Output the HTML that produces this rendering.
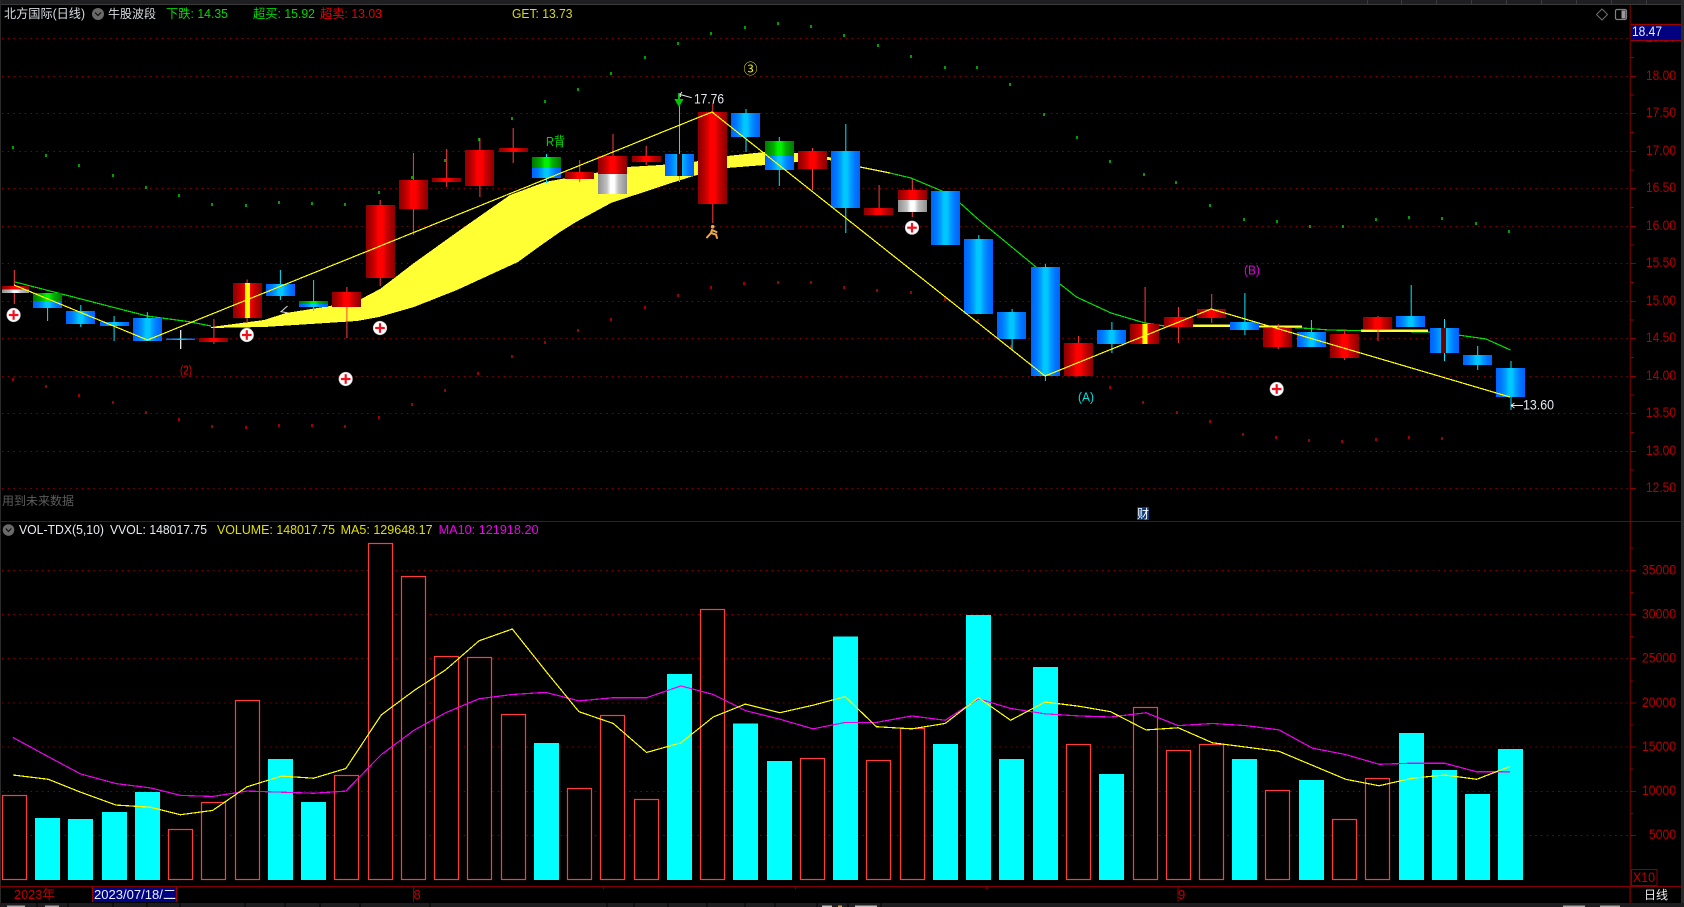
<!DOCTYPE html>
<html lang="zh">
<head>
<meta charset="utf-8">
<title>北方国际(日线)</title>
<style>
html,body{margin:0;padding:0;background:#000;width:1684px;height:907px;overflow:hidden}
svg{display:block;font-family:"Liberation Sans","Noto Sans CJK SC",sans-serif}
.g{stroke:#850000;stroke-width:1;stroke-dasharray:1.5 4.2;fill:none}
.ax{fill:#b40000;font-size:14px}
.wr{fill:#ff3c3c}
.wc{fill:#00e8ff}
.v{fill:#000;stroke:#ff3c3c;stroke-width:1.2}
.f{fill:#00ffff}
.c{shape-rendering:crispEdges}
</style>
</head>
<body>
<svg width="1684" height="907" viewBox="0 0 1684 907" xmlns="http://www.w3.org/2000/svg">
<defs>
<linearGradient id="r"><stop offset="0" stop-color="#8c0000"/><stop offset=".14" stop-color="#a80000"/><stop offset=".3" stop-color="#d00000"/><stop offset=".42" stop-color="#ff0000"/><stop offset=".58" stop-color="#ff0000"/><stop offset=".7" stop-color="#d00000"/><stop offset=".86" stop-color="#a80000"/><stop offset="1" stop-color="#8c0000"/></linearGradient>
<linearGradient id="b"><stop offset="0" stop-color="#0060ff"/><stop offset=".18" stop-color="#0078ff"/><stop offset=".34" stop-color="#00a0ff"/><stop offset=".44" stop-color="#00c8ff"/><stop offset=".56" stop-color="#00c8ff"/><stop offset=".66" stop-color="#00a0ff"/><stop offset=".82" stop-color="#0078ff"/><stop offset="1" stop-color="#0060ff"/></linearGradient>
<linearGradient id="n"><stop offset="0" stop-color="#007800"/><stop offset=".3" stop-color="#00b000"/><stop offset=".44" stop-color="#00f000"/><stop offset=".56" stop-color="#00f000"/><stop offset=".7" stop-color="#00b000"/><stop offset="1" stop-color="#007800"/></linearGradient>
<linearGradient id="w"><stop offset="0" stop-color="#909090"/><stop offset=".3" stop-color="#c0c0c0"/><stop offset=".44" stop-color="#ffffff"/><stop offset=".56" stop-color="#ffffff"/><stop offset=".7" stop-color="#c0c0c0"/><stop offset="1" stop-color="#909090"/></linearGradient>
<g id="plus"><circle r="6.8" fill="#fff" stroke="#bbb" stroke-width=".6"/><rect x="-4.8" y="-1.1" width="9.6" height="2.2" fill="#f01020"/><rect x="-1.1" y="-4.8" width="2.2" height="9.6" fill="#f01020"/></g>
</defs>

<rect width="1684" height="907" fill="#000"/>

<!-- frame -->
<rect x="0" y="0" width="1684" height="4" fill="#1f1f21"/>
<rect x="0" y="4" width="1684" height="1" fill="#3a3a3a"/>
<path d="M1367.5 0v4M1401.5 0v4M1436.5 0v4M1471.5 0v4M1506.5 0v4M1541.5 0v4M1576.5 0v4M1611.5 0v4M1646.5 0v4" stroke="#3a3a3a"/>
<rect x="0" y="0" width="1" height="907" fill="#2a2a2a"/>
<rect x="1681" y="0" width="3" height="907" fill="#2a2a2c"/>
<rect x="0" y="903" width="1684" height="4" fill="#1d1d1f"/>
<path d="M37 903v4M68 903v4M113 903v4M147 903v4M180 903v4M245 903v4M285 903v4M320 903v4M360 903v4M430 903v4M607 903v4M634 903v4M668 903v4M707 903v4M745 903v4M775 903v4M817 903v4M848 903v4M881 903v4" stroke="#000"/>
<rect x="7" y="905.5" width="18" height="1.5" fill="#a8a8a8"/><rect x="45" y="905.5" width="14" height="1.5" fill="#a8a8a8"/>
<rect x="822" y="905.5" width="10" height="1.5" fill="#c0c0c0"/><rect x="838" y="905.5" width="4" height="1.5" fill="#cfa060"/><rect x="855" y="905.5" width="22" height="1.5" fill="#c0c0c0"/>
<rect x="1563" y="905.5" width="22" height="1.5" fill="#a8a8a8"/><rect x="1600" y="905.5" width="20" height="1.5" fill="#a8a8a8"/>

<!-- price grid -->
<path class="g" d="M2 38.5H1630M2 76.5H1630M2 113.5H1630M2 151.5H1630M2 188.5H1630M2 226.5H1630M2 263.5H1630M2 301.5H1630M2 338.5H1630M2 376.5H1630M2 413.5H1630M2 451.5H1630M2 488.5H1630"/>
<!-- volume grid -->
<path class="g" d="M2 570.5H1630M2 614.5H1630M2 658.5H1630M2 703H1630M2 747H1630M2 791.5H1630M2 835.5H1630"/>

<!-- dots -->
<path fill="none" stroke="#00e000" stroke-width="1.4" d="M13 146v3M46 154v3M79 164v3M113 174v3M146 186v3M179 194v3M212 203v3M246 204v3M279 201v3M312 202v3M345 203v3M379 191v3M412 176v3M445 159v3M479 138v3M512 117v3M545 100v3M578 88v3M611 72v3M645 56v3M678 42v3M711 32v3M745 26v3M778 22v3M811 25v3M844 34v3M878 44v3M911 55v3M945 66v3M977 66v3M1010 83v3M1044 113v3M1077 136v3M1110 160v3M1144 173v3M1176 181v3M1210 204v3M1244 218v3M1277 220v3M1310 225v3M1343 225v3M1376 218v3M1409 216v3M1442 217v3M1476 222v3M1509 230v3"/>
<path fill="none" stroke="#e00000" stroke-width="1.4" d="M13 378v3M46 385v3M79 394v3M113 401v3M146 411v3M179 418v3M212 425v3M246 426v3M279 424v3M312 424v3M345 425v3M379 416v3M412 403v3M445 389v3M478 372v3M512 355v3M545 341v3M578 329v3M611 318v3M645 306v3M678 294v3M711 286v3M744 282v3M778 281v3M811 281v3M844 286v3M877 289v3M911 291v3M945 298v3M978 319v3M1011 345v3M1044 364v3M1077 374v3M1110 386v3M1143 401v3M1177 411v3M1210 420v3M1243 433v3M1276 436v3M1309 439v3M1342 440v3M1376 438v3M1409 436v3M1442 437v3"/>

<!-- yellow band -->
<polygon class="c" fill="#ffff33" points="211,327 264,320 286,313 330,306 361,299 380,289 414,263 460,230 510,195 545,182 561,179 580,176 600,172 627,167 660,165 693,162 727,156 765,152 797,153 829,157 850,165 860,167 829,160 797,162 765,165 727,168 693.6,176 665,185 611,203 576,222 560,232 540,246 518,262 457,290 414,307 379,317 357,321 264,327 211,328"/>
<polyline class="c" fill="none" stroke="#ffff33" stroke-width="1.2" points="860,167 890,173"/>

<!-- green line -->
<polyline class="c" fill="none" stroke="#00e000" stroke-width="1.2" points="14,281.7 147,316 189,321.7 211,326"/>
<polyline class="c" fill="none" stroke="#00e000" stroke-width="1.2" points="890,173 911,178 942,191 960,203 979,220 1036,267 1060,284 1076.5,297 1111,313 1145,323 1165,326 1260,326 1302,328 1329,330 1428,332 1458,335 1486,339 1510.5,350"/>

<rect x="1193" y="324.5" width="37" height="2.5" fill="#ffff33"/>
<rect x="1259" y="325.5" width="43" height="2" fill="#ffff33"/>
<rect x="1361" y="329.5" width="67" height="2.5" fill="#ffff33"/>

<!-- wicks -->
<g class="wr">
<rect x="13.8" y="270" width="1" height="34"/>
<rect x="213.4" y="319" width="1" height="25"/>
<rect x="246.6" y="279.5" width="1" height="43.5"/>
<rect x="346.4" y="287" width="1" height="51"/>
<rect x="379.7" y="200" width="1" height="86"/>
<rect x="412.9" y="153" width="1" height="82"/>
<rect x="446.2" y="149" width="1" height="38"/>
<rect x="479.4" y="138" width="1" height="59"/>
<rect x="512.7" y="128" width="1" height="35"/>
<rect x="579.2" y="160" width="1" height="22"/>
<rect x="612.5" y="134" width="1" height="40"/>
<rect x="645.7" y="146" width="1" height="19"/>
<rect x="712.3" y="103" width="1" height="120"/>
<rect x="812" y="148" width="1" height="42"/>
<rect x="878.6" y="185" width="1" height="25"/>
<rect x="911.8" y="179" width="1" height="38"/>
<rect x="1078.1" y="336" width="1" height="10"/>
<rect x="1144.6" y="287" width="1" height="57"/>
<rect x="1177.9" y="307" width="1" height="36"/>
<rect x="1211.2" y="294" width="1" height="29"/>
<rect x="1277.7" y="324" width="1" height="25"/>
<rect x="1344.2" y="330" width="1" height="30"/>
<rect x="1377.5" y="316" width="1" height="25"/>
</g>
<g class="wc">
<rect x="47.1" y="300" width="1" height="21"/>
<rect x="80.3" y="305" width="1" height="22"/>
<rect x="113.6" y="316" width="1" height="25"/>
<rect x="146.8" y="312" width="1" height="29"/>
<rect x="279.9" y="270" width="1" height="30"/>
<rect x="313.1" y="280" width="1" height="31"/>
<rect x="546" y="154" width="1" height="29"/>
<rect x="679" y="106" width="1" height="76"/>
<rect x="745.5" y="109" width="1" height="43"/>
<rect x="778.8" y="137" width="1" height="49"/>
<rect x="845.3" y="124" width="1" height="109"/>
<rect x="945.1" y="191" width="1" height="4"/>
<rect x="978.3" y="235" width="1" height="5"/>
<rect x="1011.6" y="309" width="1" height="41"/>
<rect x="1044.9" y="264" width="1" height="117"/>
<rect x="1111.4" y="322" width="1" height="31"/>
<rect x="1244.4" y="293" width="1" height="42"/>
<rect x="1310.9" y="320" width="1" height="14"/>
<rect x="1410.7" y="285" width="1" height="35"/>
<rect x="1444" y="319" width="1" height="42"/>
<rect x="1477.2" y="346" width="1" height="24"/>
<rect x="1510.5" y="361" width="1" height="49"/>
</g>
<rect x="180.1" y="330" width="1.2" height="19" fill="#fff"/>

<!-- bodies -->
<rect x="2" y="286" width="27" height="3.5" fill="url(#r)"/><rect x="2" y="289.5" width="27" height="3.5" fill="url(#w)"/>
<rect x="33" y="293" width="29" height="8" fill="url(#n)"/><rect x="33" y="301" width="29" height="7" fill="url(#b)"/>
<rect x="66" y="311" width="29" height="13" fill="url(#b)"/>
<rect x="100" y="322" width="29" height="4" fill="url(#b)"/>
<rect x="133" y="318" width="29" height="23" fill="url(#b)"/>
<rect x="166" y="338.5" width="29" height="1.5" fill="url(#b)"/>
<rect x="199" y="338" width="29" height="4" fill="url(#r)"/>
<rect x="233" y="283" width="29" height="35" fill="url(#r)"/><rect x="245" y="283" width="5" height="35" fill="#ffff00"/>
<rect x="266" y="284" width="29" height="12" fill="url(#b)"/>
<rect x="299" y="301" width="29" height="3" fill="url(#n)"/><rect x="299" y="304" width="29" height="3" fill="url(#b)"/>
<rect x="332" y="292" width="29" height="15" fill="url(#r)"/>
<rect x="366" y="205" width="29" height="73" fill="url(#r)"/>
<rect x="399" y="180" width="29" height="29" fill="url(#r)"/>
<rect x="432" y="178" width="29" height="4" fill="url(#r)"/>
<rect x="465" y="150" width="29" height="36" fill="url(#r)"/>
<rect x="499" y="148" width="29" height="4" fill="url(#r)"/>
<rect x="532" y="157" width="29" height="11" fill="url(#n)"/><rect x="532" y="168" width="29" height="10" fill="url(#b)"/>
<rect x="565" y="172" width="29" height="7" fill="url(#r)"/>
<rect x="598" y="156" width="29" height="18" fill="url(#r)"/><rect x="598" y="174" width="29" height="20" fill="url(#w)"/>
<rect x="632" y="156" width="29" height="6" fill="url(#r)"/>
<rect x="665" y="154" width="29" height="22" fill="url(#b)"/><rect x="677" y="154" width="5" height="22" fill="#300000"/>
<rect x="698" y="112" width="29" height="92" fill="url(#r)"/>
<rect x="731" y="113" width="29" height="24" fill="url(#b)"/>
<rect x="765" y="141" width="29" height="15" fill="url(#n)"/><rect x="765" y="156" width="29" height="14" fill="url(#b)"/>
<rect x="798" y="151" width="29" height="18" fill="url(#r)"/>
<rect x="831" y="151" width="29" height="57" fill="url(#b)"/>
<rect x="864" y="208" width="29" height="7" fill="url(#r)"/>
<rect x="898" y="190" width="29" height="10" fill="url(#r)"/><rect x="898" y="200" width="29" height="12" fill="url(#w)"/>
<rect x="931" y="191" width="29" height="54" fill="url(#b)"/>
<rect x="964" y="239" width="29" height="75" fill="url(#b)"/>
<rect x="997" y="312" width="29" height="27" fill="url(#b)"/>
<rect x="1031" y="267" width="29" height="109" fill="url(#b)"/>
<rect x="1064" y="343" width="29" height="33" fill="url(#r)"/>
<rect x="1097" y="330" width="29" height="14" fill="url(#b)"/>
<rect x="1130" y="324" width="29" height="20" fill="url(#r)"/><rect x="1142.5" y="324" width="5" height="20" fill="#ffff00"/>
<rect x="1164" y="317" width="29" height="10" fill="url(#r)"/>
<rect x="1197" y="309" width="29" height="9" fill="url(#r)"/>
<rect x="1230" y="322" width="29" height="8" fill="url(#b)"/>
<rect x="1263" y="328" width="29" height="19" fill="url(#r)"/>
<rect x="1297" y="332" width="29" height="15" fill="url(#b)"/>
<rect x="1330" y="334" width="29" height="24" fill="url(#r)"/>
<rect x="1363" y="317" width="29" height="12" fill="url(#r)"/>
<rect x="1396" y="316" width="29" height="11" fill="url(#b)"/>
<rect x="1430" y="328" width="29" height="25" fill="url(#b)"/><rect x="1441" y="328" width="5" height="25" fill="#700000"/>
<rect x="1463" y="355" width="29" height="10" fill="url(#b)"/>
<rect x="1496" y="368" width="29" height="29" fill="url(#b)"/>

<!-- zigzag -->
<polyline class="c" fill="none" stroke="#ffff00" stroke-width="1.2" points="14,285 147.5,340 712,112 1045,376 1211,309 1510,397"/>

<!-- markers -->
<use href="#plus" x="13.6" y="315"/>
<use href="#plus" x="246.8" y="335"/>
<use href="#plus" x="380" y="328"/>
<use href="#plus" x="345.7" y="379"/>
<use href="#plus" x="912" y="227.7"/>
<use href="#plus" x="1276.7" y="389"/>

<path d="M287.5 306L281 311.7L287.5 312.7" fill="none" stroke="#d8d8d8" stroke-width="1"/>
<rect x="678" y="93" width="2" height="7" fill="#00c000"/>
<polygon points="674.3,99 683.6,99 679,107" fill="#00c800"/>
<path d="M691.7 97.7L680 94.5M680 94.5l2 -2.5M680 94.5l0.5 2.5" fill="none" stroke="#f0f0f0" stroke-width="1"/>
<g fill="none" stroke="#f0a850" stroke-width="2" stroke-linecap="round"><path d="M712 230L711 233L707 237.5M711 233L716 234.5L717 238M712 230L716.5 232"/></g>
<circle cx="712.7" cy="226.7" r="1.8" fill="#f0a850"/>
<path d="M1511 405.5H1523M1511 405.5l3.5 -2.5M1511 405.5l3.5 2.5" fill="none" stroke="#e8e8e8" stroke-width="1"/>

<!-- chart labels -->
<text x="180" y="374.5" fill="#e00000" font-size="13" textLength="12" lengthAdjust="spacingAndGlyphs">(2)</text>
<text x="546" y="146" fill="#00dc00" font-size="13" textLength="19" lengthAdjust="spacingAndGlyphs">R背</text>
<text x="743.5" y="74" fill="#f0f000" font-size="14">③</text>
<text x="694" y="103.5" fill="#e4e8f0" font-size="13.5" textLength="30" lengthAdjust="spacingAndGlyphs">17.76</text>
<text x="1078" y="401.5" fill="#00e0e0" font-size="13" textLength="16" lengthAdjust="spacingAndGlyphs">(A)</text>
<text x="1244" y="274.5" fill="#e000e0" font-size="13" textLength="16" lengthAdjust="spacingAndGlyphs">(B)</text>
<text x="1523" y="409.5" fill="#e4e8f0" font-size="13.5" textLength="31" lengthAdjust="spacingAndGlyphs">13.60</text>
<text x="2" y="505" fill="#5c5c5c" font-size="12" textLength="72" lengthAdjust="spacingAndGlyphs">用到未来数据</text>
<rect x="1137" y="507" width="12" height="13" fill="#0a3a78"/>
<text x="1137" y="518" fill="#fff" font-size="12">财</text>

<!-- header -->
<text x="4" y="18" fill="#d8dce0" font-size="12.5" textLength="81" lengthAdjust="spacingAndGlyphs">北方国际(日线)</text>
<circle cx="98" cy="14" r="6" fill="#6a6a6a"/><path d="M95 12.5L98 15.5L101 12.5" fill="none" stroke="#111" stroke-width="1.2"/>
<text x="108" y="18" fill="#d8dce0" font-size="12">牛股波段</text>
<text x="166" y="18" fill="#00d800" font-size="12.5" textLength="62" lengthAdjust="spacingAndGlyphs">下跌: 14.35</text>
<text x="253" y="18" fill="#00d800" font-size="12.5" textLength="62" lengthAdjust="spacingAndGlyphs">超买: 15.92</text>
<text x="320" y="18" fill="#e80000" font-size="12.5" textLength="62" lengthAdjust="spacingAndGlyphs">超卖: 13.03</text>
<text x="512" y="18" fill="#d8d820" font-size="12.5" textLength="60.5" lengthAdjust="spacingAndGlyphs">GET: 13.73</text>

<!-- top right icons -->
<polygon points="1602,9 1607.5,14.5 1602,20 1596.5,14.5" fill="none" stroke="#707070" stroke-width="1"/>
<rect x="1615.5" y="9.5" width="11" height="10" rx="1.5" fill="none" stroke="#808080" stroke-width="1.2"/>
<rect x="1621.5" y="10.5" width="4" height="8" fill="#9a9a9a"/>

<!-- panel separators -->
<rect x="0" y="521" width="1681" height="1" fill="#800000"/>
<rect x="0" y="886" width="1681" height="1.2" fill="#800000"/>

<!-- axis -->
<rect x="1629.7" y="5" width="1" height="898" fill="#8a0000"/>
<path d="M1630 57.5h4M1630 95h4M1630 132.5h4M1630 170h4M1630 207.5h4M1630 245h4M1630 282.5h4M1630 320h4M1630 357.5h4M1630 395h4M1630 432.5h4M1630 470h4M1630 76.5h6M1630 113.5h6M1630 151.5h6M1630 188.5h6M1630 226.5h6M1630 263.5h6M1630 301.5h6M1630 338.5h6M1630 376.5h6M1630 413.5h6M1630 451.5h6M1630 488.5h6M1630 570.5h6M1630 614.5h6M1630 658.5h6M1630 703h6M1630 747h6M1630 791.5h6M1630 835.5h6M1630 548h3M1630 592.5h3M1630 636.5h3M1630 681h3M1630 725h3M1630 769h3M1630 813.5h3" stroke="#8a0000" fill="none"/>
<g class="ax">
<text x="1646" y="42" textLength="30" lengthAdjust="spacingAndGlyphs">18.50</text>
<text x="1646" y="80" textLength="30" lengthAdjust="spacingAndGlyphs">18.00</text>
<text x="1646" y="117" textLength="30" lengthAdjust="spacingAndGlyphs">17.50</text>
<text x="1646" y="155" textLength="30" lengthAdjust="spacingAndGlyphs">17.00</text>
<text x="1646" y="192" textLength="30" lengthAdjust="spacingAndGlyphs">16.50</text>
<text x="1646" y="230" textLength="30" lengthAdjust="spacingAndGlyphs">16.00</text>
<text x="1646" y="267" textLength="30" lengthAdjust="spacingAndGlyphs">15.50</text>
<text x="1646" y="305" textLength="30" lengthAdjust="spacingAndGlyphs">15.00</text>
<text x="1646" y="342" textLength="30" lengthAdjust="spacingAndGlyphs">14.50</text>
<text x="1646" y="380" textLength="30" lengthAdjust="spacingAndGlyphs">14.00</text>
<text x="1646" y="417" textLength="30" lengthAdjust="spacingAndGlyphs">13.50</text>
<text x="1646" y="455" textLength="30" lengthAdjust="spacingAndGlyphs">13.00</text>
<text x="1646" y="492" textLength="30" lengthAdjust="spacingAndGlyphs">12.50</text>
<text x="1642" y="574.5" textLength="34" lengthAdjust="spacingAndGlyphs">35000</text>
<text x="1642" y="618.5" textLength="34" lengthAdjust="spacingAndGlyphs">30000</text>
<text x="1642" y="662.5" textLength="34" lengthAdjust="spacingAndGlyphs">25000</text>
<text x="1642" y="707" textLength="34" lengthAdjust="spacingAndGlyphs">20000</text>
<text x="1642" y="751" textLength="34" lengthAdjust="spacingAndGlyphs">15000</text>
<text x="1642" y="795" textLength="34" lengthAdjust="spacingAndGlyphs">10000</text>
<text x="1649" y="839" textLength="27" lengthAdjust="spacingAndGlyphs">5000</text>
</g>
<rect x="1631" y="23.5" width="50" height="17" fill="#000080"/>
<path d="M1631 24.5H1681M1631 40.5H1681" stroke="#a00000" stroke-width="1"/>
<text x="1632" y="36" fill="#e8f0ff" font-size="13.5" textLength="30" lengthAdjust="spacingAndGlyphs">18.47</text>

<!-- volume legend -->
<circle cx="8.5" cy="530" r="5.8" fill="#6a6a6a"/><path d="M5.8 528.5L8.5 531.5L11.2 528.5" fill="none" stroke="#111" stroke-width="1.2"/>
<text x="19" y="534" fill="#e8ecf0" font-size="12.5" textLength="85" lengthAdjust="spacingAndGlyphs">VOL-TDX(5,10)</text>
<text x="110" y="534" fill="#e8ecf0" font-size="12.5" textLength="97" lengthAdjust="spacingAndGlyphs">VVOL: 148017.75</text>
<text x="217" y="534" fill="#e0e000" font-size="12.5" textLength="118" lengthAdjust="spacingAndGlyphs">VOLUME: 148017.75</text>
<text x="340.6" y="534" fill="#e0e000" font-size="12.5" textLength="92" lengthAdjust="spacingAndGlyphs">MA5: 129648.17</text>
<text x="438.6" y="534" fill="#f000f0" font-size="12.5" textLength="100" lengthAdjust="spacingAndGlyphs">MA10: 121918.20</text>

<!-- volume bars -->
<rect class="v" x="2.5" y="795.5" width="24" height="84"/>
<rect class="f" x="35" y="818" width="25" height="62"/>
<rect class="f" x="68" y="819" width="25" height="61"/>
<rect class="f" x="102" y="812" width="25" height="68"/>
<rect class="f" x="135" y="792" width="25" height="88"/>
<rect class="v" x="168.5" y="829.5" width="24" height="50"/>
<rect class="v" x="201.5" y="802.5" width="24" height="77"/>
<rect class="v" x="235.5" y="700.5" width="24" height="179"/>
<rect class="f" x="268" y="759" width="25" height="121"/>
<rect class="f" x="301" y="802" width="25" height="78"/>
<rect class="v" x="334.5" y="775.5" width="24" height="104"/>
<rect class="v" x="368.5" y="543.5" width="24" height="336"/>
<rect class="v" x="401.5" y="576.5" width="24" height="303"/>
<rect class="v" x="434.5" y="656.5" width="24" height="223"/>
<rect class="v" x="467.5" y="657.5" width="24" height="222"/>
<rect class="v" x="501.5" y="714.5" width="24" height="165"/>
<rect class="f" x="534" y="743" width="25" height="137"/>
<rect class="v" x="567.5" y="788.5" width="24" height="91"/>
<rect class="v" x="600.5" y="715.5" width="24" height="164"/>
<rect class="v" x="634.5" y="799.5" width="24" height="80"/>
<rect class="f" x="667" y="674" width="25" height="206"/>
<rect class="v" x="700.5" y="609.5" width="24" height="270"/>
<rect class="f" x="733" y="723.5" width="25" height="156.5"/>
<rect class="f" x="767" y="761" width="25" height="119"/>
<rect class="v" x="800.5" y="758.5" width="24" height="121"/>
<rect class="f" x="833" y="636.5" width="25" height="243.5"/>
<rect class="v" x="866.5" y="760.5" width="24" height="119"/>
<rect class="v" x="900.5" y="728.5" width="24" height="151"/>
<rect class="f" x="933" y="744" width="25" height="136"/>
<rect class="f" x="966" y="615" width="25" height="265"/>
<rect class="f" x="999" y="759" width="25" height="121"/>
<rect class="f" x="1033" y="667" width="25" height="213"/>
<rect class="v" x="1066.5" y="744.5" width="24" height="135"/>
<rect class="f" x="1099" y="774" width="25" height="106"/>
<rect class="v" x="1133.5" y="707.5" width="24" height="172"/>
<rect class="v" x="1166.5" y="750.5" width="24" height="129"/>
<rect class="v" x="1199.5" y="744.5" width="24" height="135"/>
<rect class="f" x="1232" y="759" width="25" height="121"/>
<rect class="v" x="1265.5" y="790.5" width="24" height="89"/>
<rect class="f" x="1299" y="780" width="25" height="100"/>
<rect class="v" x="1332.5" y="819.5" width="24" height="60"/>
<rect class="v" x="1365.5" y="778.5" width="24" height="101"/>
<rect class="f" x="1399" y="733" width="25" height="147"/>
<rect class="f" x="1432" y="770" width="25" height="110"/>
<rect class="f" x="1465" y="794" width="25" height="86"/>
<rect class="f" x="1498" y="749" width="25" height="131"/>

<!-- MA lines -->
<g class="c" transform="scale(1.074,1.0734)" fill="none" stroke-width="1.2">
<polyline vector-effect="non-scaling-stroke" stroke="#f000f0" points="12,687 45,705 75,721 108,730 140,734 168,741 198,742 230,737 262,738 292,739 322,737 355,703 386,680 415,664 446,651 477,647 508,645 539,653 571,650 602,650 634,639 664,647 694,662 726,670 757,679 787,673 816,673 849,667 880,671 911,651 941,660 973,665 1005,667 1034,668 1067,664 1097,676 1129,674 1160,676 1191,680 1222,697 1253,703 1284,712 1315,711 1345,711 1375,719 1406,719"/>
<polyline vector-effect="non-scaling-stroke" stroke="#ffff00" points="12,722 45,726 75,738 108,750 140,752 168,759 198,755 230,733 262,723 292,725 322,716 355,666 386,643 415,624 446,597 477,586 508,625 539,663 571,674 602,701 634,692 664,668 694,656 726,664 757,657 787,649 816,677 849,679 880,674 911,650 941,671 973,654 1005,658 1034,663 1067,680 1097,678 1129,692 1160,696 1191,700 1222,713 1253,726 1284,732 1315,725 1345,722 1375,726 1406,714"/>
</g>

<!-- X10 -->
<rect x="1631.5" y="869.5" width="25.5" height="16" fill="#000" stroke="#8a0000"/>
<text x="1633" y="882" fill="#c00000" font-size="13.5" textLength="22" lengthAdjust="spacingAndGlyphs">X10</text>

<!-- time axis -->
<path d="M603.5 886v3M795.5 886v3M986.5 886v3M413.5 886v16M1178 886v16M1630 886v16" stroke="#8a0000"/>
<text x="14" y="899" fill="#c00000" font-size="13" textLength="41" lengthAdjust="spacingAndGlyphs">2023年</text>
<rect x="92.5" y="887" width="84" height="15" fill="#000080"/>
<path d="M92.5 887v15M176.5 887v15" stroke="#a00000"/>
<text x="94" y="899" fill="#e8f0ff" font-size="13" textLength="82" lengthAdjust="spacingAndGlyphs">2023/07/18/二</text>
<text x="413.5" y="899" fill="#c00000" font-size="13">8</text>
<text x="1178" y="899" fill="#c00000" font-size="13">9</text>
<text x="1644" y="899" fill="#e8ecf0" font-size="12">日线</text>
</svg>
</body>
</html>
